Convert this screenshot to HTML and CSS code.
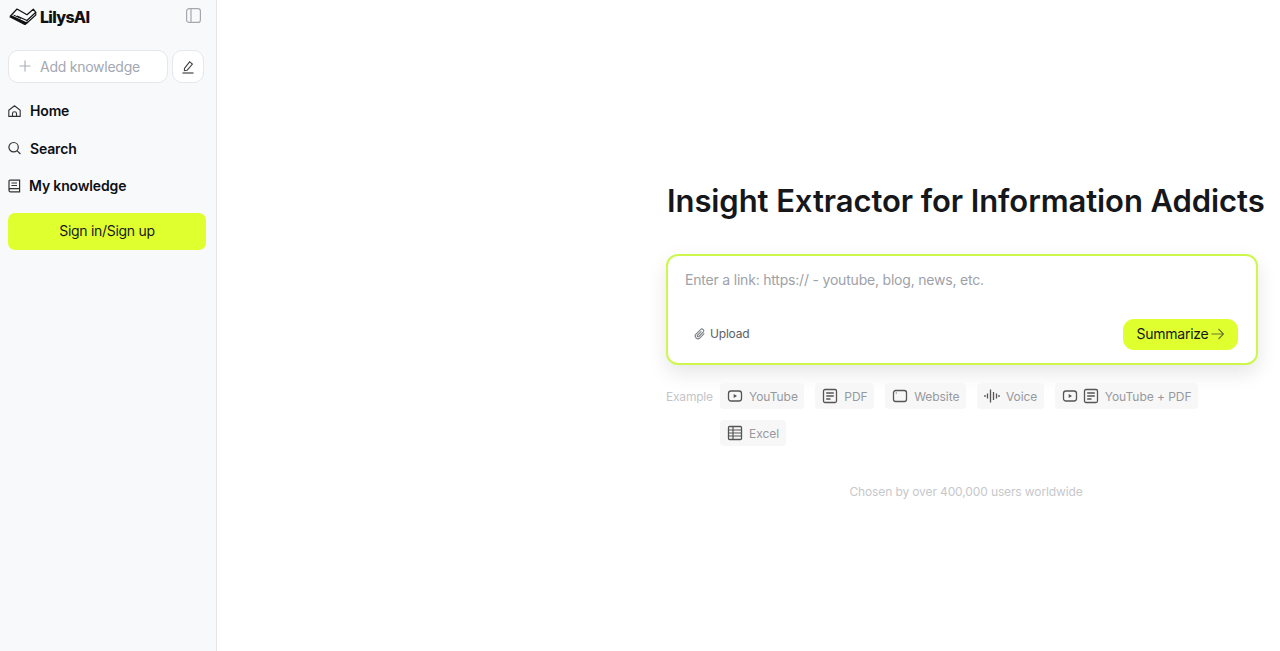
FILE: index.html
```html
<!DOCTYPE html>
<html lang="en">
<head>
  <meta charset="UTF-8">
  <meta name="viewport" content="width=device-width, initial-scale=1.0">
  <title>LilysAI</title>
  <link rel="stylesheet" href="styles.css">
</head>
<body>

<aside class="sidebar">
  <div class="brand-row">
    <div class="brand">
      <svg class="logo" width="28" height="18" viewBox="0 0 28 18" fill="none">
        <path d="M1 8.5L8 1L18 6.7L24.3 1.2L26.8 4.3L18 12.5L8 8" stroke="#111" stroke-width="1.2" stroke-linejoin="round"/>
        <path d="M4.5 7L12 10.5" stroke="#111" stroke-width="1"/>
        <path d="M18 15L26.8 7V4.3" stroke="#111" stroke-width="1.1"/>
        <path d="M0 9L3 7.6L17 14L18.5 13V15.2L16.5 17H15.5Z" fill="#111"/>
      </svg>
      <span class="brand-name">LilysAI</span>
    </div>
    <svg class="panel-icon" width="15" height="15" viewBox="0 0 15 15" fill="none">
      <rect x="0.6" y="0.6" width="13.8" height="13.8" rx="2.5" stroke="#a4a8ae" stroke-width="1.2"/>
      <path d="M5 0.6V14.4" stroke="#a4a8ae" stroke-width="1.2"/>
    </svg>
  </div>

  <div class="add-row">
    <div class="add-box">
      <svg width="14" height="14" viewBox="0 0 14 14" fill="none">
        <path d="M7 1.5V12.5M1.5 7H12.5" stroke="#a9adb5" stroke-width="1.1"/>
      </svg>
      <span>Add knowledge</span>
    </div>
    <button type="button" class="note-btn">
      <svg width="14" height="14" viewBox="0 0 14 14" fill="none">
        <path d="M3.5 8.4L8.6 1.8L11.4 4L6.2 10.2L3.4 10.6Z" stroke="#444" stroke-width="1.1"/>
        <path d="M1.5 13H12.5" stroke="#444" stroke-width="1.2"/>
      </svg>
    </button>
  </div>

  <nav class="nav">
    <a class="nav-item">
      <svg width="13" height="14" viewBox="0 0 13 14" fill="none">
        <path d="M0.8 6.2L6.5 1.8L12.2 6.2V12.4H0.8Z" stroke="#333" stroke-width="1.1" stroke-linejoin="round"/>
        <path d="M4.5 12.4V9.4C4.5 7.2 8.5 7.2 8.5 9.4V12.4" stroke="#333" stroke-width="1.1"/>
      </svg>
      <span>Home</span>
    </a>
    <a class="nav-item">
      <svg width="13" height="14" viewBox="0 0 13 14" fill="none">
        <circle cx="5.6" cy="6.2" r="4.7" stroke="#333" stroke-width="1.2"/>
        <path d="M9 9.6L12.4 13" stroke="#333" stroke-width="1.2"/>
      </svg>
      <span>Search</span>
    </a>
    <a class="nav-item nav-item-tight">
      <svg width="13" height="14" viewBox="0 0 13 14" fill="none">
        <path d="M1 11V2.2C1 1.6 1.4 1.2 2 1.2H11.6V12.8H2.4C1.6 12.8 1 12 1 11C1 10.2 1.6 9.6 2.4 9.6H11.6" stroke="#333" stroke-width="1.2"/>
        <path d="M3.4 4H9M3.4 6.5H9" stroke="#333" stroke-width="1"/>
      </svg>
      <span>My knowledge</span>
    </a>
  </nav>

  <button type="button" class="signin">Sign in/Sign up</button>
</aside>

<main class="main">
  <div class="center">
    <h1>Insight Extractor for Information Addicts</h1>

    <div class="card">
      <div class="placeholder">Enter a link: https:// - youtube, blog, news, etc.</div>
      <div class="card-foot">
        <div class="upload">
          <svg width="12" height="12" viewBox="0 0 12 12" fill="none">
            <path d="M10.3 5.4L6 9.8C4.9 10.9 3.1 10.9 2 9.8C1 8.8 1 7.2 2 6.2L6.6 1.6C7.3.9 8.5.9 9.2 1.6C9.9 2.3 9.9 3.4 9.2 4.1L4.8 8.5C4.4 8.9 3.8 8.9 3.5 8.5C3.1 8.2 3.1 7.6 3.5 7.2L7.4 3.3" stroke="#7d8187" stroke-width="1.1"/>
          </svg>
          <span>Upload</span>
        </div>
        <button type="button" class="summarize">
          <span>Summarize</span>
          <svg width="13" height="14" viewBox="0 0 13 14" fill="none">
            <path d="M0.5 7H12.5M7.5 2L12.5 7L7.5 12" stroke="#6c7230" stroke-width="1.1"/>
          </svg>
        </button>
      </div>
    </div>

    <div class="examples">
      <span class="examples-label">Example</span>
      <div class="chips">
        <div class="chip">
          <svg class="ico" viewBox="0 0 16 16" fill="none"><rect x="1.5" y="3" width="13" height="10" rx="2.5" stroke="#555" stroke-width="1.3"/><path d="M6.7 6L10 8L6.7 10Z" fill="#555"/></svg>
          <span>YouTube</span>
        </div>
        <div class="chip">
          <svg class="ico" viewBox="0 0 16 16" fill="none"><rect x="1.5" y="1.5" width="13" height="13" rx="1.5" stroke="#555" stroke-width="1.3"/><path d="M4.2 5H11.8M4.2 8H11.8M4.2 11H8.5" stroke="#555" stroke-width="1.3"/></svg>
          <span>PDF</span>
        </div>
        <div class="chip">
          <svg class="ico" viewBox="0 0 16 16" fill="none"><rect x="1.5" y="2.5" width="13" height="11" rx="2.2" stroke="#555" stroke-width="1.3"/><path d="M3.8 5H4.8" stroke="#555" stroke-width="1"/></svg>
          <span>Website</span>
        </div>
        <div class="chip">
          <svg class="ico" viewBox="0 0 16 16" fill="none"><path d="M1 7V9M3.5 5.5V10.5M6.5 1.5V14.5M9.5 4V12M12.5 5.5V10.5M15 7V9" stroke="#555" stroke-width="1.3"/></svg>
          <span>Voice</span>
        </div>
        <div class="chip chip-double">
          <svg class="ico" viewBox="0 0 16 16" fill="none"><rect x="1.5" y="3" width="13" height="10" rx="2.5" stroke="#555" stroke-width="1.3"/><path d="M6.7 6L10 8L6.7 10Z" fill="#555"/></svg>
          <svg class="ico" viewBox="0 0 16 16" fill="none"><rect x="1.5" y="1.5" width="13" height="13" rx="1.5" stroke="#555" stroke-width="1.3"/><path d="M4.2 5H11.8M4.2 8H11.8M4.2 11H8.5" stroke="#555" stroke-width="1.3"/></svg>
          <span>YouTube + PDF</span>
        </div>
        <div class="chip">
          <svg class="ico" viewBox="0 0 16 16" fill="none"><rect x="1.5" y="1.5" width="13" height="13" rx="1" stroke="#555" stroke-width="1.3"/><path d="M1.5 5H14.5M1.5 8H14.5M1.5 11H14.5M6 1.5V14.5" stroke="#555" stroke-width="1.2"/></svg>
          <span>Excel</span>
        </div>
      </div>
    </div>

    <p class="chosen">Chosen by over 400,000 users worldwide</p>
  </div>
</main>

</body>
</html>
```

FILE: styles.css
```css
* {
  box-sizing: border-box;
}
html, body {
  height: 100%;
}
body {
  font-family: Inter, "Noto Sans", sans-serif;
  margin: 0;
  background-color: white;
  display: flex;
  overflow: hidden;
}
svg {
  flex-shrink: 0;
  display: block;
}
button {
  font-family: inherit;
  cursor: pointer;
}

/* sidebar */
.sidebar {
  width: 217px;
  height: 651px;
  flex-shrink: 0;
  background-color: #f8f9fb;
  border-right: 1px solid #e4e6ea;
  padding: 7px 10px 0 8px;
}
.brand-row {
  display: flex;
  align-items: center;
  justify-content: space-between;
  padding: 0 5px 0 1px;
  height: 20px;
}
.brand {
  display: flex;
  align-items: center;
  gap: 3px;
}
.brand-name {
  font-size: 16px;
  font-weight: 800;
  letter-spacing: -0.7px;
  color: #111;
}
.panel-icon {
  margin-bottom: 3px;
}
.add-row {
  display: flex;
  gap: 4px;
  margin-top: 23px;
}
.add-box {
  width: 160px;
  height: 33px;
  background: white;
  border: 1px solid #e5e7eb;
  border-radius: 10px;
  display: flex;
  align-items: center;
  gap: 8px;
  padding: 0 0 1px 9px;
  font-size: 14px;
  letter-spacing: -0.25px;
  color: #a3a8b3;
}
.note-btn {
  width: 32px;
  height: 33px;
  background: white;
  border: 1px solid #e5e7eb;
  border-radius: 10px;
  padding: 0;
  display: flex;
  align-items: center;
  justify-content: center;
}
.nav {
  margin-top: 9px;
  display: flex;
  flex-direction: column;
}
.nav-item {
  height: 37.5px;
  display: flex;
  align-items: center;
  gap: 9px;
  font-size: 14px;
  letter-spacing: -0.15px;
  font-weight: 600;
  color: #0c0f14;
}
.nav-item-tight {
  gap: 8px;
}
.signin {
  margin-top: 8px;
  width: 198px;
  height: 37px;
  padding: 0 0 2px;
  background-color: #e0ff2e;
  border: none;
  border-radius: 7px;
  font-size: 14px;
  letter-spacing: -0.3px;
  color: #16181c;
}

/* main area */
.main {
  flex: 1;
  min-width: 0;
  padding: 183px 0 0 449px;
}
.center {
  width: 600px;
}
h1 {
  margin: 0 0 0 1px;
  font-size: 31px;
  line-height: 36px;
  font-weight: 600;
  letter-spacing: -0.08px;
  color: #15171b;
  white-space: nowrap;
}
.card {
  margin-top: 35px;
  width: 592px;
  height: 111px;
  background: white;
  border: 2px solid #cdf74a;
  border-radius: 12px;
  box-shadow: 0 8px 20px rgba(0, 0, 0, 0.1);
  padding: 14px 18px 13px 17px;
  display: flex;
  flex-direction: column;
  justify-content: space-between;
}
.placeholder {
  font-size: 14px;
  letter-spacing: -0.2px;
  line-height: 20px;
  color: #9da1a8;
}
.card-foot {
  display: flex;
  align-items: center;
  justify-content: space-between;
}
.upload {
  display: flex;
  align-items: center;
  gap: 4px;
  padding: 0 0 2px 9px;
  font-size: 12px;
  letter-spacing: -0.2px;
  color: #5c6067;
}
.summarize {
  width: 115px;
  height: 31px;
  background-color: #e0ff2e;
  border: none;
  border-radius: 11px;
  font-size: 14px;
  letter-spacing: -0.25px;
  color: #14161a;
  display: flex;
  align-items: center;
  justify-content: center;
  gap: 3px;
  padding: 0 0 2px;
}
.examples {
  margin-top: 18px;
  display: flex;
  align-items: flex-start;
  gap: 6px;
}
.examples-label {
  width: 48px;
  font-size: 12px;
  letter-spacing: -0.2px;
  line-height: 27px;
  color: #c3c5c9;
  flex-shrink: 0;
}
.chips {
  width: 500px;
  display: flex;
  flex-wrap: wrap;
  gap: 11px;
}
.chip {
  height: 26px;
  background-color: #f7f7f7;
  border-radius: 4px;
  display: flex;
  align-items: center;
  gap: 6px;
  padding: 0 6.5px 0 7px;
  font-size: 12px;
  letter-spacing: -0.05px;
  color: #96999e;
}
.chip-double {
  gap: 5.5px;
}
.ico {
  width: 16px;
  height: 16px;
}
.chosen {
  margin: 38px 0 0;
  width: 600px;
  text-align: center;
  font-size: 12px;
  letter-spacing: -0.12px;
  color: #c6c8cc;
}
```
